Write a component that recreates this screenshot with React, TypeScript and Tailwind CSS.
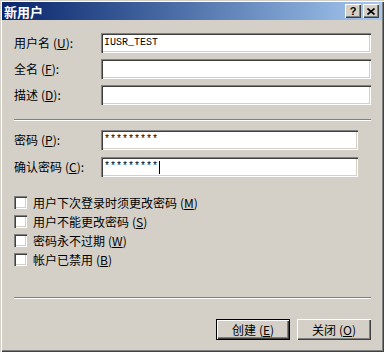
import React from "react";

const raised =
  "shadow-[inset_1px_1px_0_#ffffff,inset_-1px_-1px_0_#404040,inset_-2px_-2px_0_#808080]";
const sunken =
  "shadow-[inset_1px_1px_0_#808080,inset_2px_2px_0_#404040,inset_-1px_-1px_0_#ffffff,inset_-2px_-2px_0_#d4d0c8]";

function Mn({ text, k }: { text: string; k: string }) {
  return (
    <span className="whitespace-nowrap">
      {text}
      <span className="ml-[3px]">
        (<span className="underline underline-offset-[1px]">{k}</span>)
      </span>
    </span>
  );
}

function Field({
  label,
  k,
  value,
  narrow,
  cursor,
}: {
  label: string;
  k: string;
  value?: string;
  narrow?: boolean;
  cursor?: boolean;
}) {
  return (
    <div className="flex items-center h-[20px]">
      <div className="w-[87px] text-[12px] leading-none text-black">
        <Mn text={label} k={k} />:
      </div>
      <div
        className={`${narrow ? "w-[257px]" : "flex-1"} h-[20px] bg-white ${sunken} flex items-center pl-[3px]`}
      >
        {value && (
          <span className="font-['Liberation_Mono',monospace] text-[10px] leading-none text-black">
            {value}
          </span>
        )}
        {cursor && <span className="w-[1px] h-[13px] bg-black ml-[1px]" />}
      </div>
    </div>
  );
}

function Check({ label, k }: { label: string; k: string }) {
  return (
    <div className="flex items-center h-[19px]">
      <div className={`w-[13px] h-[13px] bg-white ${sunken}`} />
      <div className="ml-[6px] text-[12px] leading-none text-black">
        <Mn text={label} k={k} />
      </div>
    </div>
  );
}

export default function App() {
  return (
    <div
      className={`w-[384px] h-[352px] bg-[#d4d0c8] p-[2px] flex flex-col font-['Noto_Sans_CJK_SC',sans-serif] shadow-[inset_1px_1px_0_#d4d0c8,inset_2px_2px_0_#ffffff,inset_-1px_-1px_0_#404040,inset_-2px_-2px_0_#808080]`}
    >
      {/* title bar */}
      <div className="h-[18px] flex items-center bg-gradient-to-r from-[#0a246a] to-[#a6caf0] pl-[2px] pr-[3px]">
        <span className="text-white font-bold text-[13px] leading-none">新用户</span>
        <div className="ml-auto flex gap-[2px]">
          <div
            className={`w-[16px] h-[14px] bg-[#d4d0c8] ${raised} flex items-center justify-center`}
          >
            <span className="font-['Liberation_Sans',sans-serif] font-bold text-[11px] leading-none text-black">
              ?
            </span>
          </div>
          <div
            className={`w-[16px] h-[14px] bg-[#d4d0c8] ${raised} flex items-center justify-center`}
          >
            <svg width="8" height="7" viewBox="0 0 8 7">
              <path d="M0.5 0.5 L7.5 6.5 M7.5 0.5 L0.5 6.5" stroke="#000" strokeWidth="1.6" />
            </svg>
          </div>
        </div>
      </div>

      {/* content */}
      <div className="flex-1 flex flex-col pl-[12px] pr-[11px] pt-[13px]">
        <div className="flex flex-col gap-[6px]">
          <Field label="用户名" k="U" value="IUSR_TEST" />
          <Field label="全名" k="F" />
          <Field label="描述" k="D" />
        </div>

        <div className="mt-[14px] h-[2px] border-t border-t-[#808080] border-b border-b-white" />

        <div className="mt-[9px] flex flex-col gap-[7px]">
          <Field label="密码" k="P" value="*********" narrow />
          <Field label="确认密码" k="C" value="*********" narrow cursor />
        </div>

        <div className="mt-[16px] flex flex-col">
          <Check label="用户下次登录时须更改密码" k="M" />
          <Check label="用户不能更改密码" k="S" />
          <Check label="密码永不过期" k="W" />
          <Check label="帐户已禁用" k="B" />
        </div>

        <div className="mt-[28px] h-[2px] border-t border-t-[#808080] border-b border-b-white" />

        <div className="mt-[20px] flex justify-end gap-[7px]">
          <div className="w-[74px] h-[21px] border border-black">
            <div
              className={`w-full h-full ${raised} flex items-center justify-center text-[12px] leading-none text-black`}
            >
              <Mn text="创建" k="E" />
            </div>
          </div>
          <div
            className={`w-[74px] h-[21px] ${raised} flex items-center justify-center text-[12px] leading-none text-black`}
          >
            <Mn text="关闭" k="O" />
          </div>
        </div>
      </div>
    </div>
  );
}
